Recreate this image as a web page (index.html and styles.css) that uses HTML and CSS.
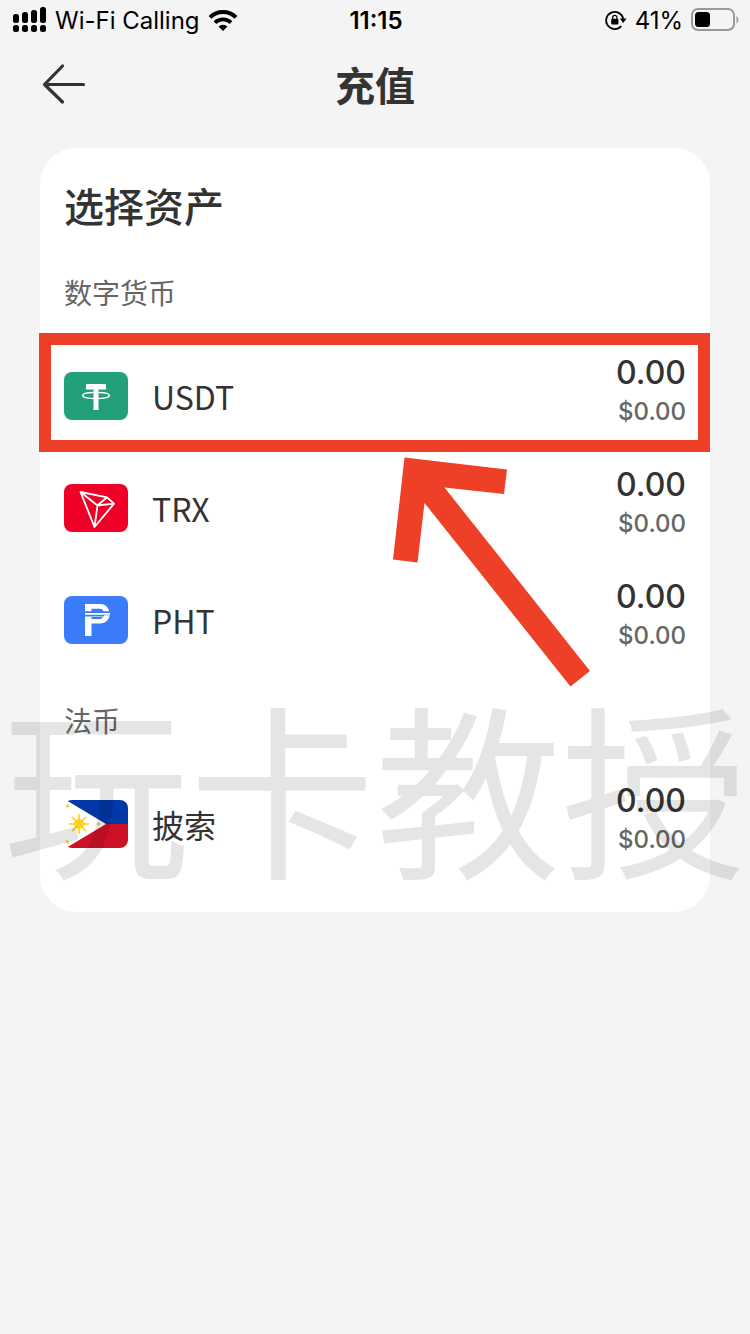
FILE: index.html
```html
<!DOCTYPE html>
<html lang="zh-CN">
<head>
    <meta charset="UTF-8">
    <meta name="viewport" content="width=device-width, initial-scale=1.0">
    <title>充值</title>
    <link rel="stylesheet" href="styles.css">
</head>
<body>

    <div class="status-bar">
        <div class="status-left">
            <svg width="34" height="26" viewBox="0 0 34 26" aria-hidden="true">
                <rect x="0" y="7" width="6" height="9" rx="2.5"/>
                <rect x="9" y="5" width="6" height="11" rx="2.5"/>
                <rect x="18" y="3" width="6" height="13" rx="2.5"/>
                <rect x="27" y="0" width="6" height="16" rx="2.5"/>
                <rect x="0" y="18" width="6" height="7" rx="2.5"/>
                <rect x="9" y="18" width="6" height="7" rx="2.5"/>
                <rect x="18" y="18" width="6" height="7" rx="2.5"/>
                <rect x="27" y="18" width="6" height="7" rx="2.5"/>
            </svg>
            <span>Wi-Fi Calling</span>
            <svg width="30" height="22" viewBox="0 0 30 22" aria-hidden="true">
                <path d="M2 8.3a18.5 18.5 0 0 1 26 0" fill="none" stroke="#000" stroke-width="4"/>
                <path d="M7 13.6a11.5 11.5 0 0 1 16 0" fill="none" stroke="#000" stroke-width="3.8"/>
                <path d="M15 22l-4.5-4.5a6.4 6.4 0 0 1 9 0z"/>
            </svg>
        </div>
        <time class="status-time">11:15</time>
        <div class="status-right">
            <svg width="22" height="20" viewBox="0 0 22 20" aria-hidden="true">
                <path d="M16.2 16.2A8.6 8.6 0 1 1 18.2 8.8" fill="none" stroke="#000" stroke-width="1.8"/>
                <path d="M14.8 8.6h6.8l-3.4 4.3z"/>
                <rect x="6.2" y="8.7" width="7.2" height="5.8" rx="1"/>
                <path d="M7.7 9V7.4a2.1 2.1 0 0 1 4.2 0V9" fill="none" stroke="#000" stroke-width="1.3"/>
            </svg>
            <span>41%</span>
            <svg width="48" height="24" viewBox="0 0 48 24" aria-hidden="true">
                <rect x="1" y="1" width="42" height="21" rx="6" fill="none" stroke="#999" stroke-width="2"/>
                <rect x="4" y="4" width="15" height="15" rx="3.5"/>
                <path d="M45.5 8c2.5 1.5 2.5 6 0 7.5z" fill="#999"/>
            </svg>
        </div>
    </div>

    <header class="header">
        <button class="back" type="button" aria-label="返回">
            <svg width="44" height="40" viewBox="0 0 44 40" aria-hidden="true">
                <path d="M20.5 2L2.5 20.5l18 17.5M2.5 20.5H41.5" fill="none" stroke="#333" stroke-width="3.2" stroke-linecap="round" stroke-linejoin="round"/>
            </svg>
        </button>
        <h1>充值</h1>
    </header>

    <main class="card">
        <h2>选择资产</h2>

        <section>
            <h3>数字货币</h3>
            <ul class="assets">
                <li class="highlighted">
                    <button class="asset" type="button">
                        <svg class="logo" viewBox="0 0 64 48" aria-hidden="true">
                            <rect width="64" height="48" rx="8" fill="#22a079"/>
                            <path d="M22 12h20v5.5H34.5V38h-5V17.5H22z" fill="#fff"/>
                            <path d="M29.5 20.5c-6.5.2-11 1.4-11 2.900 0 1.700 6 3 13.500 3s13.500-1.300 13.500-3c0-1.500-4.500-2.700-11-2.900" fill="none" stroke="#fff" stroke-width="1.3"/>
                        </svg>
                        <span class="name">USDT</span>
                        <span class="balance">
                            <span class="amount">0.00</span>
                            <span class="value">$0.00</span>
                        </span>
                    </button>
                    <svg class="arrow" width="198" height="231" viewBox="0 0 198 231" aria-hidden="true">
                        <path d="M11.5 .5L114 12.500L111 37L51.500 30.500L197 214L177.500 229.500L31.500 46L24.500 105.500L0 102.500z" fill="#ee4027"/>
                    </svg>
                </li>
                <li>
                    <button class="asset" type="button">
                        <svg class="logo" viewBox="0 0 64 48" aria-hidden="true">
                            <rect width="64" height="48" rx="8" fill="#ef0027"/>
                            <path d="M16.5 8L43 13.3L50 19.7L30.5 43zM16.5 8L33.5 21.5L30.5 43M33.5 21.5L43 13.3M33.5 21.5L50 19.7" fill="none" stroke="#fff" stroke-width="1.8" stroke-linejoin="round"/>
                        </svg>
                        <span class="name">TRX</span>
                        <span class="balance">
                            <span class="amount">0.00</span>
                            <span class="value">$0.00</span>
                        </span>
                    </button>
                </li>
                <li>
                    <button class="asset" type="button">
                        <svg class="logo" viewBox="0 0 64 48" aria-hidden="true">
                            <rect width="64" height="48" rx="8" fill="#3b7cfa"/>
                            <path d="M21 8h15c5 0 8 2.800 9.300 7.300H39.500c-.8-1.800-2-2.500-4-2.500H27.500v2.500H21z" fill="#fff"/>
                            <path d="M21 17h25v1.800H21z" fill="#fff"/>
                            <path d="M21 20.500h18.500l1-1.200h5.200c-1 5.300-4.700 8.200-9.700 8.200H27.500V40H21zM27.500 21v2h8c1.500 0 2.500-.6 3.500-2z" fill="#fff" fill-rule="evenodd"/>
                        </svg>
                        <span class="name">PHT</span>
                        <span class="balance">
                            <span class="amount">0.00</span>
                            <span class="value">$0.00</span>
                        </span>
                    </button>
                </li>
            </ul>
        </section>

        <section class="fiat">
            <h3>法币</h3>
            <ul class="assets">
                <li>
                    <button class="asset" type="button">
                        <svg class="logo flag" viewBox="0 0 64 48" aria-hidden="true">
                            <rect width="64" height="48" fill="#fff"/>
                            <path d="M2 0H64V24H42z" fill="#0038a8"/>
                            <path d="M2 48H64V24H42z" fill="#ce1126"/>
                            <g fill="none" stroke="#fcd116" stroke-width="1.6">
                                <path d="M15 14v20M5 24h20M8 17l14 14M22 17L8 31"/>
                            </g>
                            <circle cx="15" cy="24" r="5" fill="#fcd116"/>
                            <g fill="#f3d34a">
                                <circle cx="3.5" cy="6" r="1.8"/>
                                <circle cx="3.5" cy="42" r="1.8"/>
                                <circle cx="34.5" cy="24" r="1.8"/>
                            </g>
                        </svg>
                        <span class="name">披索</span>
                        <span class="balance">
                            <span class="amount">0.00</span>
                            <span class="value">$0.00</span>
                        </span>
                    </button>
                </li>
            </ul>
        </section>

        <div class="watermark">玩卡教授</div>
    </main>

</body>
</html>
```

FILE: styles.css
```css
* {
    box-sizing: border-box;
}

body {
    margin: 0;
    min-height: 100vh;
    background-color: #f4f4f4;
    color: #333;
    font-family: Inter, "Noto Sans CJK SC", sans-serif;
    overflow-x: hidden;
}

h1, h2, h3, ul {
    margin: 0;
    padding: 0;
}

h1, h3 {
    font-family: "Noto Sans CJK SC", sans-serif;
}

button {
    padding: 0;
    border: 0;
    background: none;
    color: inherit;
    font: inherit;
    cursor: pointer;
}

.status-bar {
    display: grid;
    grid-template-columns: 1fr auto 1fr;
    align-items: center;
    height: 40px;
    padding: 0 11px 0 13px;
    color: #000;
    font-size: 24px;
}

.status-left,
.status-right {
    display: flex;
    align-items: center;
    gap: 8px;
}

.status-right {
    justify-content: flex-end;
}

.status-time {
    font-weight: 600;
}

.header {
    display: grid;
    grid-template-columns: 1fr auto 1fr;
    align-items: center;
    height: 88px;
    padding: 0 42px;
}

.header h1 {
    font-size: 40px;
    font-weight: 700;
    line-height: 56px;
}

.back {
    display: flex;
    justify-self: start;
}

.card {
    position: relative;
    margin: 20px 40px;
    padding: 32px 0;
    border-radius: 36px;
    background-color: #fff;
}

.card h2 {
    padding: 0 24px;
    font-size: 40px;
    font-weight: 500;
    line-height: 56px;
}

.card h3 {
    margin: 36px 0 28px;
    padding: 0 24px;
    color: #666;
    font-size: 28px;
    font-weight: 400;
    line-height: 40px;
}

.card .fiat h3 {
    margin-top: 24px;
}

.assets {
    list-style: none;
}

.asset {
    display: flex;
    align-items: center;
    gap: 24px;
    width: 100%;
    height: 112px;
    padding: 0 24px;
    text-align: left;
}

.logo {
    width: 64px;
    height: 48px;
}

.flag {
    border-radius: 8px;
}

.name {
    flex: 1;
    font-family: "Noto Sans CJK SC", sans-serif;
    font-size: 32px;
}

.balance {
    display: flex;
    flex-direction: column;
    padding-bottom: 12px;
    text-align: right;
}

.amount {
    font-size: 32px;
    font-weight: 500;
    line-height: 44px;
}

.value {
    color: #666;
    font-size: 24px;
    font-weight: 500;
    line-height: 34px;
}

/* red frame and arrow over the asset to pick */
.highlighted {
    position: relative;
}

.highlighted::after {
    content: "";
    position: absolute;
    inset: -7px 0 0 -1px;
    border: 12px solid #ee4027;
    pointer-events: none;
}

.arrow {
    position: absolute;
    top: 117px;
    left: 353px;
    z-index: 1;
    pointer-events: none;
}

.watermark {
    position: absolute;
    right: -40px;
    bottom: 34px;
    left: -40px;
    color: rgba(0, 0, 0, 0.1);
    font-family: "Noto Sans CJK SC", sans-serif;
    font-size: 186px;
    line-height: 188px;
    text-align: center;
    white-space: nowrap;
    pointer-events: none;
}
```
